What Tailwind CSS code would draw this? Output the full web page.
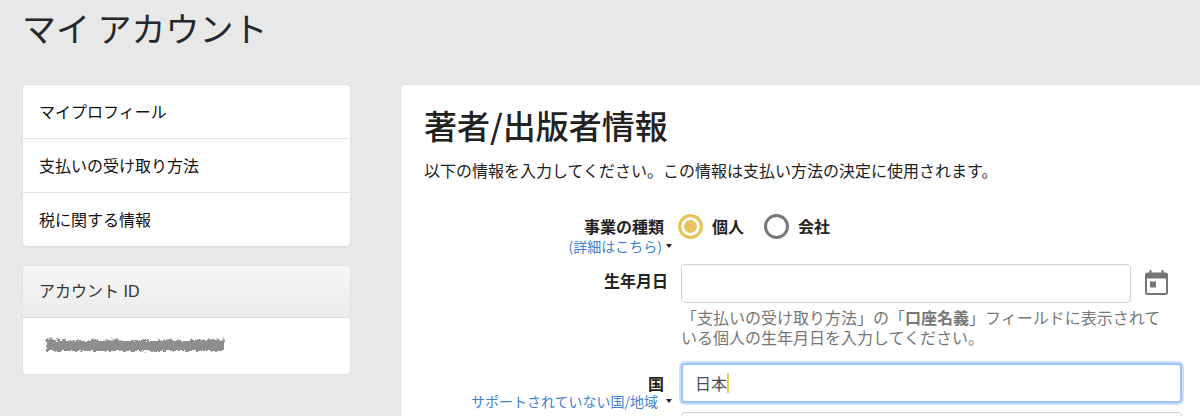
<!DOCTYPE html>
<html lang="ja">
<head>
    <meta charset="UTF-8">
    <meta name="viewport" content="width=device-width, initial-scale=1.0">
    <title>マイ アカウント</title>
    <script src="https://cdn.jsdelivr.net/npm/@tailwindcss/browser@4"></script>
</head>
<body class="h-screen overflow-hidden bg-[#e8e8e8] font-['Noto_Sans_CJK_JP',sans-serif] text-base text-[#222]">

    <header class="px-[22px] pt-1.5">
        <h1 class="text-[34px] leading-11 font-normal text-[#24282c]">マイ アカウント</h1>
    </header>

    <div class="flex items-start gap-[49px] pt-[34px] pl-[22px]">
        <aside class="w-[329px] shrink-0">
            <nav class="rounded-[5px] border border-[#dfe2e6] bg-white text-[#111] shadow-xs">
                <a href="#profile" class="block px-4 py-[14px] leading-[25px]">マイプロフィール</a>
                <a href="#payment" class="block border-t border-[#dfe2e6] px-4 py-[14px] leading-[25px]">支払いの受け取り方法</a>
                <a href="#tax" class="block border-t border-[#dfe2e6] px-4 py-[14px] leading-[25px]">税に関する情報</a>
            </nav>

            <section class="mt-[18px] rounded-[5px] border border-[#dfe2e6] bg-white">
                <h2 class="rounded-t-[4px] border-b border-[#dcdee0] bg-linear-to-b from-[#f7f7f7] to-[#ebebeb] px-4 py-[13px] font-['Liberation_Sans','Noto_Sans_CJK_JP',sans-serif] leading-[25px] text-[#333]">アカウント ID</h2>
                <div class="px-[22px] py-[18px]">
                    <svg class="block" width="182" height="20" viewBox="0 0 182 20" aria-hidden="true">
                        <filter id="rough" x="-4" y="-4" width="190" height="28" filterUnits="userSpaceOnUse">
                            <feTurbulence type="fractalNoise" baseFrequency="0.35" numOctaves="2" seed="4" />
                            <feDisplacementMap in="SourceGraphic" scale="6" xChannelSelector="R" yChannelSelector="G" />
                            <feGaussianBlur stdDeviation="0.4" />
                        </filter>
                        <g filter="url(#rough)" fill="none" stroke="#8e8e8e">
                            <path d="M1 4H8M12 3L16 8L20 3M24 6H36M46 5H52M60 5H78M90 4V8M96 5H102M112 5H134M146 5H180" stroke-width="3" />
                            <path d="M1 10H179" stroke-width="10" />
                        </g>
                    </svg>
                </div>
            </section>
        </aside>

        <main class="min-w-0 flex-1 rounded-tl-[5px] border-t border-l border-[#e2e3e5] bg-white pt-5 pr-[18px] pb-10 pl-[23px]">
            <h2 class="text-[33px] leading-10 font-medium">著者/出版者情報</h2>
            <p class="mt-[13px] leading-6">以下の情報を入力してください。この情報は支払い方法の決定に使用されます。</p>

            <form class="mt-[31px]">
                <fieldset class="grid grid-cols-[248px_1fr] gap-x-[9px]">
                    <div class="pt-[3px] text-right">
                        <div id="type-label" class="pr-2 leading-5 font-bold">事業の種類</div>
                        <a href="#details" class="flex items-center justify-end gap-1 text-sm leading-5 text-[#4080d0]">(詳細はこちら)
                            <svg class="size-[6px]" viewBox="0 0 6 4" fill="#222"><path d="M0 0H6L3 4Z" /></svg>
                        </a>
                    </div>
                    <div role="radiogroup" aria-labelledby="type-label" class="-ml-[3px] flex h-[26px] items-center font-bold">
                        <input type="radio" id="individual" name="type" checked class="size-[25px] appearance-none rounded-full border-[3px] border-[#e8c25a] bg-[#e8c25a] shadow-[inset_0_0_0_3px_white]">
                        <label for="individual" class="pl-[9px] leading-6">個人</label>
                        <input type="radio" id="company" name="type" class="ml-5 size-[25px] appearance-none rounded-full border-[3px] border-[#777] bg-white">
                        <label for="company" class="pl-[9px] leading-6">会社</label>
                    </div>
                </fieldset>

                <div class="mt-2 grid grid-cols-[248px_1fr] gap-x-[9px]">
                    <label for="birthday" class="pt-[6px] pr-1 text-right leading-5 font-bold">生年月日</label>
                    <div>
                        <div class="flex items-center">
                            <input type="text" id="birthday" class="h-[39px] min-w-0 flex-1 rounded-[4px] border border-[#ccd1d9] bg-white px-3">
                            <button type="button" aria-label="カレンダー" class="mx-3">
                                <svg class="block size-[27px]" viewBox="0 0 27 27">
                                    <path fill="#757575" fill-rule="evenodd" d="M6.500 0H8.500V2.500H18.500V0H20.500V2.500H22.500Q25 2.500 25 5V22.500Q25 25 22.500 25H4.500Q2 25 2 22.500V5Q2 2.500 4.500 2.500H6.500ZM4 8.500V22.500Q4 23 4.500 23H22.500Q23 23 23 22.500V8.500ZM7 11.500H13V17.500H7Z" />
                                </svg>
                            </button>
                        </div>
                        <p class="mt-1 pr-3 leading-5 text-[#777]">「支払いの受け取り方法」の「<b>口座名義</b>」フィールドに表示されている個人の生年月日を入力してください。</p>
                    </div>
                </div>

                <div class="mt-4 grid grid-cols-[248px_1fr] gap-x-[9px]">
                    <div class="pt-[10px] text-right">
                        <label for="country" class="block pr-2 leading-5 font-bold">国</label>
                        <a href="#unsupported" class="flex items-center justify-end gap-2 text-sm leading-4 text-[#4080d0]">サポートされていない国/地域
                            <svg class="size-[6px]" viewBox="0 0 6 4" fill="#222"><path d="M0 0H6L3 4Z" /></svg>
                        </a>
                    </div>
                    <div>
                        <div class="relative">
                            <input type="text" id="country" value="日本" class="block h-10 w-full rounded-[4px] border-2 border-[#9cc3fa] bg-white px-3 text-[#444b55] ring-2 ring-[#cddffd] outline-none">
                            <span class="absolute top-[10px] left-[46px] h-5 w-0.5 bg-[#f0c860]"></span>
                        </div>
                        <input type="text" aria-label="住所" class="mt-[9px] block h-10 w-full rounded-[4px] border border-[#ccd1d9] bg-white px-3">
                    </div>
                </div>
            </form>
        </main>
    </div>

</body>
</html>
